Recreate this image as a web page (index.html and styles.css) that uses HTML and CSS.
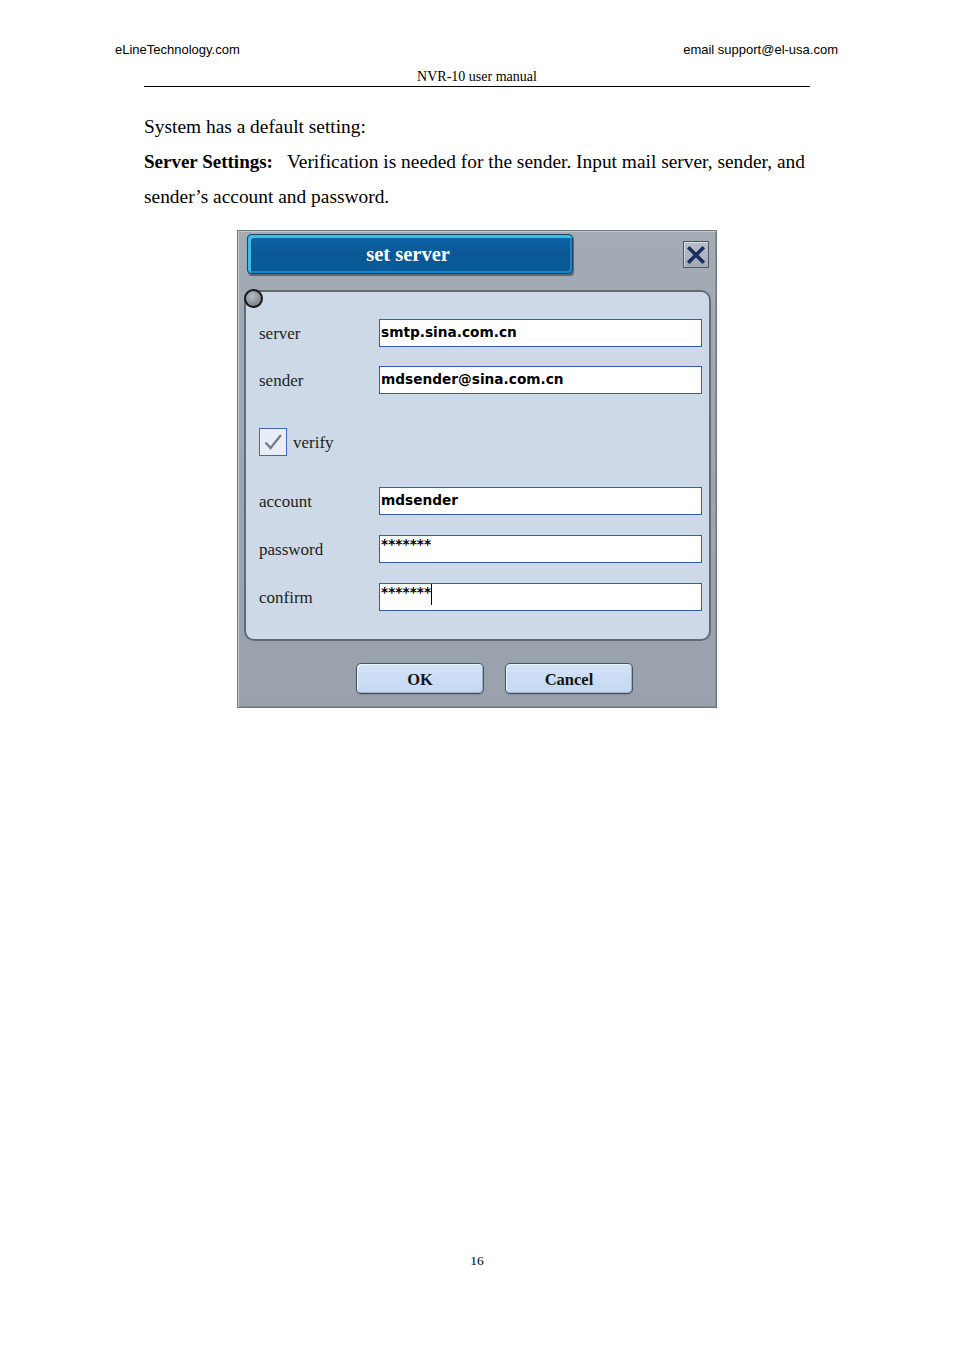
FILE: index.html
```html
<!DOCTYPE html>
<html lang="en">
<head>
<meta charset="utf-8">
<title>NVR-10 user manual</title>
<link rel="stylesheet" href="styles.css">
</head>
<body>
<div class="page">
  <div class="top-row">
    <span>eLineTechnology.com</span>
    <span>email support@el-usa.com</span>
  </div>
  <div class="manual-title">NVR-10 user manual</div>

  <div class="content">
    <p class="line">System has a default setting:</p>
    <p class="para"><b>Server Settings:</b><span class="gap"></span>Verification is needed for the sender. Input mail server, sender, and sender’s account and password.</p>

    <div class="dialog">
      <div class="dlg-head">
        <div class="dlg-title">set server</div>
        <div class="dlg-close">
          <svg width="20" height="20" viewBox="0 0 20 20"><path d="M3.5 3.5 L16.5 16.5 M16.5 3.5 L3.5 16.5" stroke="#1b2c62" stroke-width="3.6" stroke-linecap="square"/></svg>
        </div>
      </div>
      <div class="panel">
        <span class="knob"></span>
        <div class="row r-server"><span class="lbl">server</span><div class="field">smtp.sina.com.cn</div></div>
        <div class="row r-sender"><span class="lbl">sender</span><div class="field">mdsender@sina.com.cn</div></div>
        <div class="row r-verify">
          <span class="check"><svg width="22" height="22" viewBox="0 0 22 22"><path d="M3.5 11.5 L8.5 17 L19 4" fill="none" stroke="#767a82" stroke-width="2.2"/></svg></span>
          <span class="lbl-v">verify</span>
        </div>
        <div class="row r-account"><span class="lbl">account</span><div class="field">mdsender</div></div>
        <div class="row r-password"><span class="lbl">password</span><div class="field pw">*******</div></div>
        <div class="row r-confirm"><span class="lbl">confirm</span><div class="field pw"><span class="caret">*******</span></div></div>
      </div>
      <div class="btns">
        <div class="btn">OK</div>
        <div class="btn">Cancel</div>
      </div>
    </div>
  </div>

  <div class="page-num">16</div>
</div>
</body>
</html>
```

FILE: styles.css
```css
html, body {
  margin: 0;
  padding: 0;
  background: #ffffff;
}
.page {
  width: 954px;
  height: 1350px;
  position: relative;
  font-family: "Liberation Serif", "Times New Roman", serif;
  color: #000;
}
.top-row {
  display: flex;
  justify-content: space-between;
  padding: 42px 116px 0 115px;
  font-family: "Liberation Sans", Arial, sans-serif;
  font-size: 13px;
  line-height: 16px;
}
.manual-title {
  margin: 10px 144px 0 144px;
  text-align: center;
  font-size: 14px;
  line-height: 18px;
  height: 18px;
  border-bottom: 1px solid #000;
}
.content {
  padding: 0 130px 0 144px;
}
.line, .para {
  margin: 0;
  font-size: 19.4px;
  line-height: 35px;
}
.line {
  margin-top: 22px;
}
.para b {
  font-weight: bold;
  font-size: 19px;
}
.gap {
  display: inline-block;
  width: 14px;
}

/* dialog */
.dialog {
  box-sizing: border-box;
  margin: 16px 0 0 93px;
  width: 480px;
  height: 478px;
  background: #9aa3ae;
  background-image: linear-gradient(180deg, #a3abb5 0%, #98a1ac 100%);
  border: 1px solid #6e7680;
  box-shadow: inset 1px 1px 0 #c3c9d0, inset -1px -1px 0 #868e98;
  padding: 3px 7px 0 6px;
}
.dlg-head {
  display: flex;
  justify-content: space-between;
  align-items: flex-start;
  padding-left: 3px;
  height: 42px;
}
.dlg-title {
  box-sizing: border-box;
  width: 326px;
  height: 40px;
  border: 1px solid #24405c;
  border-radius: 4px;
  background: linear-gradient(180deg, #0d66a8 0%, #0a5795 50%, #0b5b99 100%);
  box-shadow: inset 3px 3px 0 #35bfe6, inset -2px -2px 0 #1289c4, 1px 2px 1px #5a6470;
  color: #ffffff;
  font-weight: bold;
  font-size: 20.5px;
  line-height: 38px;
  text-align: center;
  padding-right: 4px;
}
.dlg-close {
  margin-top: 7px;
  width: 24px;
  height: 25px;
  border: 1px solid #4f5760;
  background: linear-gradient(180deg, #b8bfc8 0%, #a2aab4 100%);
  box-shadow: inset 1px 1px 0 #d5dae0;
  display: flex;
  align-items: center;
  justify-content: center;
}

.panel {
  box-sizing: border-box;
  position: relative;
  margin-top: 14px;
  width: 467px;
  height: 351px;
  background: #cdd9e6;
  border: 2px solid #646b74;
  border-radius: 10px;
  padding: 0 0 0 13px;
}
.knob {
  position: absolute;
  left: -2px;
  top: -3px;
  width: 15px;
  height: 15px;
  border-radius: 50%;
  border: 2px solid #1a1a1a;
  background: radial-gradient(circle at 40% 35%, #b9bec4 0%, #8a9097 60%, #6c727a 100%);
}
.row {
  display: flex;
  align-items: center;
  height: 28px;
}
.r-server { margin-top: 27px; }
.r-sender { margin-top: 19px; }
.r-verify { margin-top: 34px; }
.r-account { margin-top: 31px; }
.r-password { margin-top: 20px; }
.r-confirm { margin-top: 20px; }

.lbl {
  width: 120px;
  font-size: 17px;
  color: #1e1e1e;
  line-height: 20px;
  padding-top: 2px;
}
.field {
  box-sizing: border-box;
  width: 323px;
  height: 28px;
  background: #ffffff;
  border: 1px solid #3656b8;
  font-family: "DejaVu Sans", Verdana, sans-serif;
  font-weight: bold;
  font-size: 13.7px;
  line-height: 20px;
  padding: 2px 0 0 1px;
  color: #000;
}
.field.pw {
  line-height: 16px;
  padding-top: 0;
}
.caret {
  border-right: 1px solid #000;
  display: inline-block;
  height: 21px;
  vertical-align: top;
}
.check {
  box-sizing: border-box;
  width: 28px;
  height: 28px;
  border: 1px solid #4565c0;
  background: #e9eef6;
  display: flex;
  align-items: center;
  justify-content: center;
}
.lbl-v {
  margin-left: 6px;
  font-size: 17px;
  color: #1e1e1e;
  padding-top: 2px;
}

.btns {
  display: flex;
  gap: 21px;
  padding-left: 112px;
  margin-top: 22px;
}
.btn {
  box-sizing: border-box;
  width: 128px;
  height: 31px;
  border: 1px solid #4b525b;
  border-radius: 5px;
  background: linear-gradient(180deg, #d3e3f8 0%, #c4d8f3 100%);
  box-shadow: inset 1px 1px 0 #eef4fc, inset -1px -1px 0 #9fb0c6, 0 1px 1px #7f8893;
  font-weight: bold;
  font-size: 16.5px;
  line-height: 32px;
  text-align: center;
  color: #151515;
}

.page-num {
  position: absolute;
  top: 1253px;
  left: 0;
  width: 954px;
  text-align: center;
  font-size: 13.5px;
  line-height: 16px;
}
```
